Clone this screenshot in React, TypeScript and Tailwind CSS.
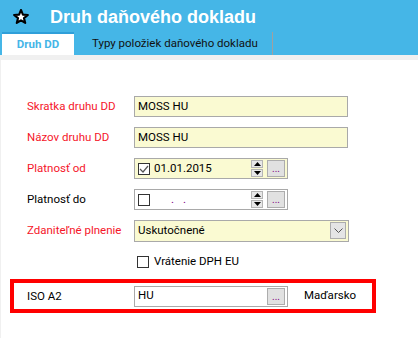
import React from "react";

const F = { fontFamily: 'Roboto, "Liberation Sans", Arial, sans-serif' };

function Ellipsis() {
  return (
    <div className="w-[18px] h-[17px] bg-[#e1e1e1] border border-[#adadad] flex items-end justify-center text-[10px] leading-[12px] text-[#800080] pb-[1px]">
      ...
    </div>
  );
}

function Spinner() {
  return (
    <div className="flex flex-col w-[12px] h-[17px] gap-px">
      <div className="flex-1 bg-[#e8e8e8] border border-[#b5b5b5] flex items-center justify-center">
        <svg width="7" height="4" viewBox="0 0 7 4"><path d="M0 4 L3.5 0 L7 4 Z" fill="#000" /></svg>
      </div>
      <div className="flex-1 bg-[#e8e8e8] border border-[#b5b5b5] flex items-center justify-center">
        <svg width="7" height="4" viewBox="0 0 7 4"><path d="M0 0 L3.5 4 L7 0 Z" fill="#000" /></svg>
      </div>
    </div>
  );
}

function Check({ checked }: { checked?: boolean }) {
  return (
    <div className="w-[12px] h-[12px] border border-[#333] bg-white flex items-center justify-center">
      {checked && (
        <svg width="10" height="8" viewBox="0 0 10 8"><path d="M1 4 L4 7 L9 1" stroke="#555" strokeWidth="1.2" fill="none" /></svg>
      )}
    </div>
  );
}

function Row({ label, red, children }: { label: string; red?: boolean; children: React.ReactNode }) {
  return (
    <div className="flex items-center h-[21px]">
      <div className={`w-[107px] text-[11.5px] ${red ? "text-[#f5162a]" : "text-black"}`}>{label}</div>
      {children}
    </div>
  );
}

export default function App() {
  return (
    <div className="w-[418px] h-[338px] bg-[#f0f0f0] flex flex-col overflow-hidden text-[11.5px]" style={F}>
      <div className="bg-[#45b6e7] h-[55px] flex flex-col">
        <div className="h-[32px] flex items-center">
          <svg className="ml-[13px] mt-[1px]" width="16" height="15" viewBox="0 0 24 23">
            <path d="M12 1.5 L14.9 8.6 L22.5 9.1 L16.6 14 L18.5 21.4 L12 17.3 L5.5 21.4 L7.4 14 L1.5 9.1 L9.1 8.6 Z" fill="#fff" stroke="#000" strokeWidth="3.2" strokeLinejoin="round" />
          </svg>
          <div className="ml-[21px] text-white font-bold text-[18px] leading-none mt-[1px]" style={{ fontFamily: '"Liberation Sans", Arial, sans-serif' }}>Druh daňového dokladu</div>
        </div>
        <div className="flex h-[23px] items-stretch">
          <div className="ml-[2px] w-[72px] bg-white border-t-2 border-[#2f9fd9] flex items-center justify-center font-bold text-[#45b6e7]">
            Druh DD
          </div>
          <div className="ml-[18px] flex items-center text-[#111]">Typy položiek daňového dokladu</div>
          <div className="ml-[14px] w-px bg-[#a0a0a0]" />
        </div>
      </div>
      <div className="h-[5px]" />
      <div className="ml-px flex-1 bg-white pt-[36px] pl-[26px] flex flex-col">
        <div className="flex flex-col gap-[10px]">
          <Row label="Skratka druhu DD" red>
            <div className="w-[214px] h-[21px] bg-[#fafad2] border border-[#a9a9a9] flex items-center pl-[3px] text-black">MOSS HU</div>
          </Row>
          <Row label="Názov druhu DD" red>
            <div className="w-[214px] h-[21px] bg-[#fafad2] border border-[#a9a9a9] flex items-center pl-[3px] text-black">MOSS HU</div>
          </Row>
          <Row label="Platnosť od" red>
            <div className="w-[154px] h-[21px] bg-[#fafad2] border border-[#a9a9a9] flex items-center pl-[3px] pr-[2px] text-black">
              <Check checked />
              <span className="ml-[4px]">01.01.2015</span>
              <div className="flex-1" />
              <Spinner />
              <div className="ml-[4px]"><Ellipsis /></div>
            </div>
          </Row>
          <Row label="Platnosť do">
            <div className="w-[154px] h-[21px] bg-white border border-[#a9a9a9] flex items-center pl-[3px] pr-[2px] text-black">
              <Check />
              <span className="ml-[21px] text-[#800080]">.</span>
              <span className="ml-[9px] text-[#800080]">.</span>
              <div className="flex-1" />
              <Spinner />
              <div className="ml-[4px]"><Ellipsis /></div>
            </div>
          </Row>
          <Row label="Zdaniteľné plnenie" red>
            <div className="w-[215px] h-[22px] bg-[#fafad2] border border-[#a9a9a9] flex items-center pl-[3px] pr-[2px] text-black">
              <span>Uskutočnené</span>
              <div className="flex-1" />
              <div className="w-[16px] h-[17px] bg-[#e5e5e5] border border-[#adadad] flex items-center justify-center">
                <svg width="9" height="5" viewBox="0 0 9 5"><path d="M0.5 0.5 L4.5 4.5 L8.5 0.5" stroke="#555" strokeWidth="1" fill="none" /></svg>
              </div>
            </div>
          </Row>
        </div>
        <div className="mt-[15px] ml-[110px] flex items-center h-[12px]">
          <div className="w-[12px] h-[12px] border border-[#333]" />
          <span className="ml-[5px] text-black">Vrátenie DPH EU</span>
        </div>
        <div className="mt-[11px] -ml-[17px] w-[366px] h-[34px] border-4 border-[#ff0000] flex items-center pl-[13px]">
          <div className="w-[107px] text-black mt-[2px]">ISO A2</div>
          <div className="w-[154px] h-[21px] bg-white border border-[#a9a9a9] flex items-center pl-[3px] pr-[2px] text-black">
            <span>HU</span>
            <div className="flex-1" />
            <Ellipsis />
          </div>
          <div className="ml-[16px] text-black">Maďarsko</div>
        </div>
      </div>
    </div>
  );
}
